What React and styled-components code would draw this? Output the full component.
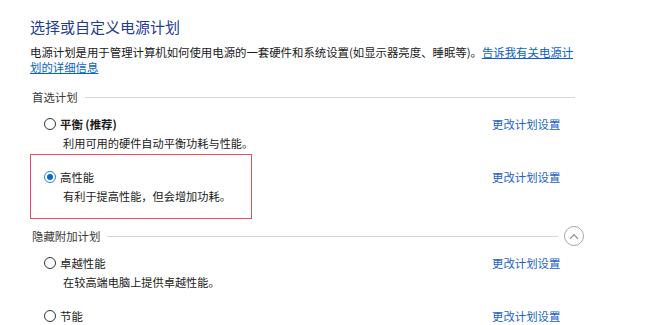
import React from "react";
import styled, { createGlobalStyle } from "styled-components";

const Global = createGlobalStyle`
  html, body { margin: 0; padding: 0; background: #ffffff; }
  body {
    font-family: "Noto Sans CJK SC", "Noto Sans", sans-serif;
    color: #1a1a1a;
    -webkit-font-smoothing: antialiased;
  }
`;

const Page = styled.div`
  width: 650px;
  height: 325px;
  overflow: hidden;
  box-sizing: border-box;
  padding: 16px 0 0 30px;
`;

const Title = styled.h1`
  margin: 0;
  font-size: 15px;
  font-weight: 400;
  line-height: 22px;
  color: #1e3c96;
`;

const Intro = styled.p`
  margin: 7px 0 0;
  width: 548px;
  font-size: 11.4px;
  line-height: 15px;
  color: #1a1a1a;
`;

const InlineLink = styled.a`
  color: #0b62c4;
  text-decoration: underline;
  text-underline-offset: 1px;
  cursor: pointer;
`;

const Section = styled.section`
  margin-top: ${(p) => p.$gap}px;
  width: 545px;
`;

const SectionHeader = styled.div`
  display: flex;
  align-items: center;
  height: 18px;
  padding-left: 2px;
  gap: 7px;
`;

const SectionLabel = styled.span`
  font-size: 11.4px;
  line-height: 18px;
  color: #3a3a3a;
  white-space: nowrap;
`;

const Rule = styled.div`
  flex: 1;
  height: 1px;
  background: #d6d6d6;
`;

const Toggle = styled.button`
  width: 20px;
  height: 20px;
  margin: 0 -9px 0 -1px;
  padding: 0;
  border: 1px solid #a8a8a8;
  border-radius: 50%;
  background: #fff;
  display: flex;
  align-items: center;
  justify-content: center;
  cursor: pointer;
  flex: none;
`;

const PlanList = styled.div`
  margin-top: 1px;
`;

const Plan = styled.div`
  display: grid;
  grid-template-columns: 462px auto;
  padding: 8px 0;
  position: relative;
  ${(p) =>
    p.$highlight &&
    `
    &::before {
      content: "";
      position: absolute;
      left: 0;
      top: -6px;
      bottom: -6px;
      width: 222px;
      box-sizing: border-box;
      border: 1px solid #e2505c;
      pointer-events: none;
    }
  `}
`;

const PlanMain = styled.div`
  display: flex;
  flex-direction: column;
`;

const PlanHead = styled.label`
  display: flex;
  align-items: center;
  gap: 4px;
  padding-left: 14px;
  height: 18px;
  cursor: pointer;
`;

const Radio = styled.span`
  width: 12px;
  height: 12px;
  box-sizing: border-box;
  border-radius: 50%;
  border: 1px solid ${(p) => (p.$checked ? "#2f7fd6" : "#333333")};
  background: #fff;
  display: flex;
  align-items: center;
  justify-content: center;
  flex: none;
  &::after {
    content: "";
    width: 6px;
    height: 6px;
    border-radius: 50%;
    background: ${(p) => (p.$checked ? "#0a66cc" : "transparent")};
  }
`;

const PlanName = styled.span`
  font-size: 11.4px;
  line-height: 18px;
  font-weight: ${(p) => (p.$bold ? 700 : 400)};
  color: #1a1a1a;
`;

const PlanDesc = styled.div`
  margin-top: 1px;
  padding-left: 33px;
  font-size: 11.2px;
  line-height: 18px;
  color: #1a1a1a;
`;

const PlanLink = styled.a`
  font-size: 11.4px;
  line-height: 18px;
  height: 18px;
  color: #1c64c8;
  text-decoration: none;
  cursor: pointer;
  white-space: nowrap;
`;

function Chevron() {
  return (
    <svg width="10" height="7" viewBox="0 0 10 7" fill="none">
      <path d="M1 5.8 L5 1.6 L9 5.8" stroke="#8a8a8a" strokeWidth="1.1" />
    </svg>
  );
}

function PlanItem({ name, desc, checked, bold, highlight }) {
  return (
    <Plan $highlight={highlight}>
      <PlanMain>
        <PlanHead>
          <Radio $checked={checked} />
          <PlanName $bold={bold}>{name}</PlanName>
        </PlanHead>
        {desc && <PlanDesc>{desc}</PlanDesc>}
      </PlanMain>
      <PlanLink>更改计划设置</PlanLink>
    </Plan>
  );
}

export default function App() {
  return (
    <>
      <Global />
      <Page>
        <Title>选择或自定义电源计划</Title>
        <Intro>
          电源计划是用于管理计算机如何使用电源的一套硬件和系统设置(如显示器亮度、睡眠等)。
          <InlineLink>告诉我有关电源计划的详细信息</InlineLink>
        </Intro>

        <Section $gap={13}>
          <SectionHeader>
            <SectionLabel>首选计划</SectionLabel>
            <Rule />
          </SectionHeader>
          <PlanList>
            <PlanItem name="平衡 (推荐)" bold desc="利用可用的硬件自动平衡功耗与性能。" />
            <PlanItem name="高性能" checked highlight desc="有利于提高性能，但会增加功耗。" />
          </PlanList>
        </Section>

        <Section $gap={14}>
          <SectionHeader>
            <SectionLabel>隐藏附加计划</SectionLabel>
            <Rule />
            <Toggle aria-label="collapse">
              <Chevron />
            </Toggle>
          </SectionHeader>
          <PlanList>
            <PlanItem name="卓越性能" desc="在较高端电脑上提供卓越性能。" />
            <PlanItem name="节能" desc="节省电量，降低性能。" />
          </PlanList>
        </Section>
      </Page>
    </>
  );
}
